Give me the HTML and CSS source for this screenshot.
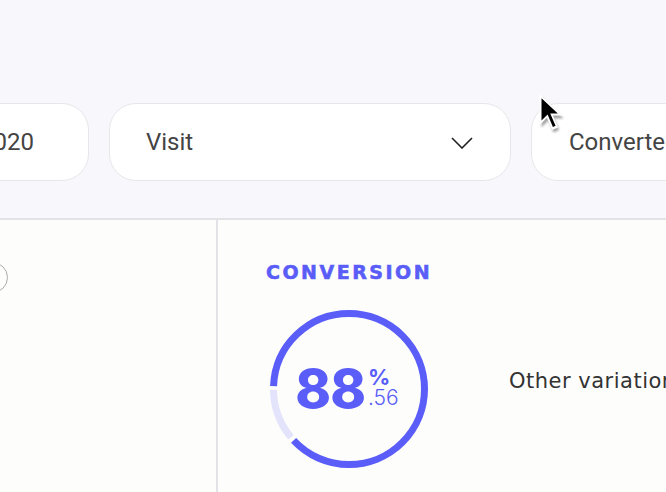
FILE: index.html
```html
<!DOCTYPE html>
<html lang="en">
<head>
<meta charset="utf-8">
<title>Conversion</title>
<link rel="stylesheet" href="styles.css">
</head>
<body>
<div class="page">
  <header class="filters">
    <div class="pill pill-date"><span class="pill-text">01/01/2020</span></div>
    <div class="pill pill-select">
      <span class="pill-text">Visit</span>
      <svg class="chevron" width="22" height="12" viewBox="0 0 22 12"><polyline points="1,1 11,11 21,1" fill="none" stroke="#222" stroke-width="1.6"/></svg>
    </div>
    <div class="pill pill-goal"><span class="pill-text">Converted</span></div>
  </header>
  <main class="content">
    <section class="side">
      <span class="side-icon"></span>
    </section>
    <section class="stats">
      <h2 class="stat-title">CONVERSION</h2>
      <div class="stat-row">
        <div class="ring">
          <svg class="ring-svg" width="160" height="160" viewBox="0 0 160 160">
            <circle cx="80" cy="80" r="75.5" fill="none" stroke="#e3e3fb" stroke-width="7" stroke-dasharray="51.4 423" stroke-dashoffset="-184.5" />
            <circle cx="80" cy="80" r="75.5" fill="none" stroke="#5a5df7" stroke-width="7" stroke-dasharray="415.1 59.3" stroke-dashoffset="-239.8" />
          </svg>
          <div class="ring-value">
            <span class="big">88</span>
            <span class="frac"><span class="pct">%</span><span class="dec">.56</span></span>
          </div>
        </div>
        <p class="other">Other variation</p>
      </div>
    </section>
  </main>
  <svg class="cursor" width="28" height="43" viewBox="0 0 22 34">
    <defs><filter id="sh" x="-50%" y="-50%" width="200%" height="200%"><feGaussianBlur stdDeviation="1"/></filter></defs>
    <path d="M3 3 L3 27 L8.5 21.5 L12.5 31 L17 29 L13 20 L20.5 20 Z" fill="#000" opacity="0.35" filter="url(#sh)" transform="translate(0.5,1)"/>
    <path d="M2 1.5 L2 26 L7.8 20.3 L11.8 30 L16.6 28 L12.6 18.6 L20 18.6 Z" fill="#fff"/>
    <path d="M3.5 5 L3.5 22.5 L8.3 17.8 L12.5 27.6 L14.6 26.7 L10.4 17 L16.4 17 Z" fill="#000"/>
  </svg>
</div>
</body>
</html>
```
FILE: styles.css
```css
* { box-sizing: border-box; }
html, body { margin: 0; padding: 0; }
body {
  width: 666px;
  height: 492px;
  overflow: hidden;
  background: #fdfdfc;
  font-family: Roboto, "Liberation Sans", sans-serif;
}
.page {
  position: relative;
  width: 666px;
  height: 492px;
  overflow: hidden;
}
.filters {
  height: 220px;
  background: #f8f8fc;
  border-bottom: 2px solid #e3e3e7;
  display: flex;
  gap: 20px;
  padding-top: 103px;
  margin-left: -111px;
  width: 900px;
}
.pill {
  height: 78px;
  background: #fff;
  border: 1.5px solid #e7e7eb;
  border-radius: 27px;
  display: flex;
  align-items: center;
  flex: none;
}
.pill-text {
  font-size: 24px;
  color: #444;
}
.pill-date {
  width: 200px;
  justify-content: flex-end;
  padding-right: 54px;
}
.pill-date .pill-text { white-space: nowrap; }
.pill-select {
  width: 402px;
  justify-content: space-between;
  padding: 0 37px 0 36px;
}
.chevron { display: block; margin-top: 1px; }
.pill-goal {
  width: 300px;
  padding-left: 37px;
}
.content {
  display: flex;
  height: 272px;
}
.side {
  width: 218px;
  border-right: 2px solid #e3e3e7;
  padding-top: 42px;
  flex: none;
}
.side-icon {
  display: block;
  width: 31px;
  height: 31px;
  border: 1.8px solid #ababab;
  border-radius: 50%;
  margin-left: -23px;
}
.stats {
  padding: 40px 0 0 48px;
  flex: 1;
}
.stat-title {
  margin: 0;
  font-family: "DejaVu Sans", sans-serif;
  font-weight: 700;
  font-size: 19px;
  line-height: 24px;
  letter-spacing: 2.5px;
  -webkit-text-stroke: 0.6px #5a5df7;
  color: #5a5df7;
}
.stat-row {
  display: flex;
  align-items: center;
  gap: 80px;
  margin-top: 25px;
  margin-left: 3px;
}
.ring {
  display: grid;
  width: 160px;
  height: 160px;
  flex: none;
}
.ring-svg, .ring-value { grid-area: 1 / 1; }
.ring-svg { display: block; }
.ring-value {
  display: flex;
  align-items: center;
  justify-content: center;
  color: #5a5df7;
  font-family: Inter, "DejaVu Sans", sans-serif;
  margin-left: -4px;
}
.big {
  font-size: 54px;
  font-weight: 800;
  letter-spacing: -1px;
  line-height: 1;
}
.frac {
  display: flex;
  flex-direction: column;
  margin-left: 3px;
  margin-top: -5px;
  line-height: 1;
}
.pct {
  font-size: 22px;
  font-weight: 700;
}
.dec {
  font-size: 21px;
  font-weight: 300;
  margin-top: -1px;
}
.other {
  margin: 0 0 16px 0;
  font-family: "DejaVu Sans", sans-serif;
  font-size: 21px;
  letter-spacing: 0.5px;
  color: #333;
  white-space: nowrap;
}
.cursor {
  position: absolute;
  left: 537px;
  top: 92px;
}
```
